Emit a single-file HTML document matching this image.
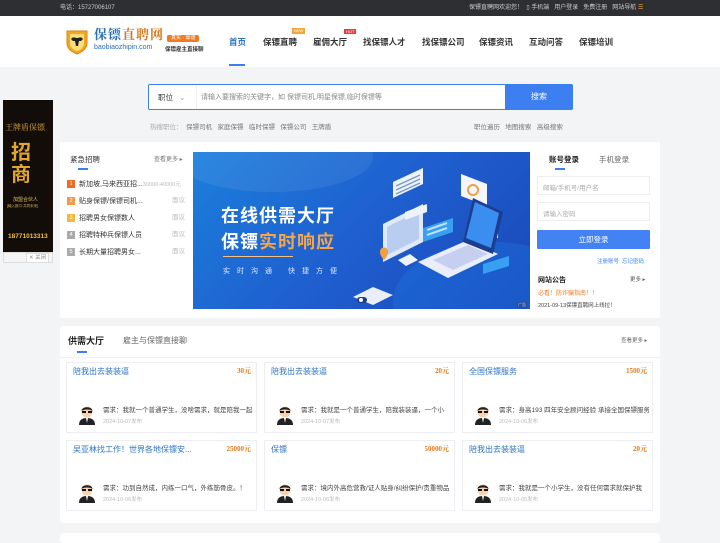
<!DOCTYPE html>
<html><head><meta charset="utf-8"><style>
*{margin:0;padding:0;box-sizing:border-box}
body{width:720px;height:540px;overflow:hidden;background:#f3f4f6;font-family:"Liberation Sans","Noto Sans CJK SC",sans-serif;font-size:8px;color:#333;position:relative}
.a{position:absolute}
.top{left:0;top:0;width:720px;height:16px;background:#2d2f33;color:#ccc;font-size:6px;line-height:16px}
.hdr{left:0;top:16px;width:720px;height:51px;background:#fff}
.nav{top:36px;font-size:8.5px;color:#333;font-weight:bold}
.panel{background:#fff}
.li{left:67px;font-size:7px;color:#333}
.num{display:inline-block;width:8px;height:8px;font-size:5.5px;color:#fff;text-align:center;line-height:8px;margin-right:4px;vertical-align:middle}
.card{background:#fff;border:1px solid #eceef1;width:191px;height:71px}
.card .t{position:absolute;left:6px;top:3px;color:#2d73c4;font-size:8px}
.card .p{position:absolute;right:5px;top:3px;color:#e87a1f;font-size:7px;font-weight:bold;font-family:"Liberation Serif","Noto Serif CJK SC",serif}
.card .d{position:absolute;left:36px;top:41px;width:150px;white-space:nowrap;overflow:hidden;font-size:6.5px;color:#444}
.card .dt{position:absolute;left:36px;top:54px;font-size:5.5px;color:#bbb}
.card svg{position:absolute;left:10px;top:40px}
</style></head><body>
<div class="a top"><span class="a" style="left:60px">电话：15727006107</span><span class="a" style="left:469px">保镖直聘网欢迎您！ &nbsp;▯ 手机端 &nbsp; 用户登录 &nbsp; 免费注册 &nbsp; 网站导航 <span style="color:#e8a33a">☰</span></span></div>
<div class="a hdr"></div>
<svg class="a" style="left:66px;top:29px" width="22" height="26" viewBox="0 0 22 26"><path d="M1 2h20v12c0 6-5 9-10 11C6 23 1 20 1 14z" fill="#f3a623" stroke="#d88610"/><path d="M4 5h14v9c0 4-3 7-7 8-4-1-7-4-7-8z" fill="#fbe07a"/><path d="M5 10c2-3 4-1 6-1s4-2 6 1l-2 2h-2l-1 5h-2l-1-5H7z" fill="#222"/></svg>
<div class="a" style="left:94px;top:24px;font-size:13px;font-weight:bold;color:#2a6fb8;letter-spacing:1px;font-family:'Noto Serif CJK SC',serif">保镖<span style="color:#d9771b">直聘网</span></div>
<div class="a" style="left:167px;top:35px;background:#f07b22;color:#fff;font-size:5px;padding:0 4px;line-height:7px;border-radius:2px">真实 · 靠谱</div>
<div class="a" style="left:94px;top:44px;font-size:7px;color:#2a6fb8">baobiaozhipin.com</div>
<div class="a" style="left:165px;top:45px;font-size:5.5px;color:#333;font-weight:bold">保镖雇主直接聊</div>
<div class="a nav" style="left:229px;color:#2d73c4">首页</div>
<div class="a" style="left:229px;top:64px;width:16px;height:2px;background:#3d7ff0"></div>
<div class="a nav" style="left:263px">保镖直聘</div>
<div class="a" style="left:292px;top:28px;background:#f2a73b;color:#fff;font-size:4px;padding:0 2px;line-height:6px">NEW</div>
<div class="a nav" style="left:313px">雇佣大厅</div>
<div class="a" style="left:344px;top:29px;background:#e63c3c;color:#fff;font-size:4px;padding:0 2px;line-height:5px">HOT</div>
<div class="a nav" style="left:363px">找保镖人才</div>
<div class="a nav" style="left:422px">找保镖公司</div>
<div class="a nav" style="left:479px">保镖资讯</div>
<div class="a nav" style="left:529px">互动问答</div>
<div class="a nav" style="left:579px">保镖培训</div>

<div class="a" style="left:148px;top:84px;width:425px;height:26px;border:1px solid #3d7ff0;background:#fff;border-radius:2px"></div>
<div class="a" style="left:158px;top:92px;font-size:7.5px;color:#333">职位 <span style="color:#999;margin-left:4px">⌄</span></div>
<div class="a" style="left:196px;top:85px;width:1px;height:24px;background:#eee"></div>
<div class="a" style="left:201px;top:92px;font-size:7px;color:#888">请输入要搜索的关键字，如 保镖司机,明星保镖,临时保镖等</div>
<div class="a" style="left:505px;top:84px;width:68px;height:26px;background:#3d7ff0;color:#fff;font-size:8px;text-align:center;line-height:26px;border-radius:0 2px 2px 0">搜索</div>
<div class="a" style="left:150px;top:121px;font-size:6.5px;color:#aaa">热搜职位： &nbsp;<span style="color:#777">保镖司机 &nbsp; 家庭保镖 &nbsp; 临时保镖 &nbsp; 保镖公司 &nbsp; 王牌盾</span></div>
<div class="a" style="left:474px;top:121px;font-size:6.5px;color:#777">职位遍历 &nbsp; 地图搜索 &nbsp; 高级搜索</div>

<div class="a" style="left:3px;top:100px;width:50px;height:153px;background:#120d08;overflow:hidden">
<div class="a" style="left:2px;top:22px;font-size:8px;color:#d9a23a;font-family:'Noto Serif CJK SC',serif">王牌盾保镖</div>
<div class="a" style="left:8px;top:42px;font-size:20px;line-height:22px;color:#e0a72c;font-weight:bold">招<br>商</div>
<div class="a" style="left:10px;top:96px;font-size:5px;color:#e8c060">加盟合伙人</div>
<div class="a" style="left:4px;top:104px;font-size:3.5px;color:#d9b050">[输入报口·共同未来]</div>
<div class="a" style="left:5px;top:133px;font-size:6.5px;color:#f0c040;font-weight:bold">18771013313</div></div>
<div class="a" style="left:3px;top:252px;width:50px;height:11px;background:#f5f5f5;border:1px solid #ddd"></div>
<div class="a" style="left:26px;top:253px;font-size:5.5px;color:#888;background:#fff;border:1px solid #ddd;padding:0 2px;line-height:8px">✕ 关闭</div>

<div class="a panel" style="left:60px;top:142px;width:600px;height:176px"></div>
<div class="a" style="left:70px;top:154px;font-size:7.5px;color:#333">紧急招聘</div>
<div class="a" style="left:78px;top:168px;width:10px;height:2px;background:#3d7ff0"></div>
<div class="a" style="left:154px;top:154px;font-size:6px;color:#777">查看更多 ▸</div>
<div class="a li" style="top:179px"><span class="num" style="background:#f06a22">1</span>新加坡,马来西亚招...<span style="color:#bbb;font-size:5.5px">30000-40000元</span></div>
<div class="a li" style="top:196px"><span class="num" style="background:#f39a4a">2</span>贴身保镖/保镖司机...</div>
<div class="a li" style="top:213px"><span class="num" style="background:#f5b73b">3</span>招聘男女保镖数人</div>
<div class="a li" style="top:230px"><span class="num" style="background:#aaa">4</span>招聘特种兵保镖人员</div>
<div class="a li" style="top:247px"><span class="num" style="background:#aaa">5</span>长期大量招聘男女...</div>
<div class="a" style="left:172px;top:192px;font-size:6.5px;color:#bbb;line-height:17px">面议<br>面议<br>面议<br>面议</div>

<div class="a" style="left:193px;top:152px;width:337px;height:157px;background:linear-gradient(135deg,#1b7fdc 0%,#1f5fcf 50%,#1a47b8 100%);overflow:hidden">
<div class="a" style="left:-20px;top:-30px;width:200px;height:70px;border-radius:50%;background:rgba(255,255,255,.07)"></div>
<div class="a" style="left:200px;top:90px;width:200px;height:120px;border-radius:50%;background:rgba(30,120,230,.35)"></div>
<div class="a" style="left:28px;top:50px;font-size:18px;font-weight:bold;color:#fff;letter-spacing:1px">在线供需大厅</div>
<div class="a" style="left:28px;top:76px;font-size:18px;font-weight:bold;color:#fff;letter-spacing:1px">保镖<span style="color:#f5a54a">实时响应</span></div>
<div class="a" style="left:30px;top:104px;width:70px;height:1px;background:#f5c080"></div>
<div class="a" style="left:30px;top:114px;font-size:7px;color:#dfe9ff;letter-spacing:7px">实时沟通 快捷方便</div>
<svg class="a" style="left:160px;top:0" width="157" height="157" viewBox="0 0 157 157">
<path d="M40 30l30-14v16l-30 14z" fill="#eef3fb"/><path d="M43 34l24-11M43 38l24-11M43 42l24-11" stroke="#7a9ac8" stroke-width="1.5"/>
<path d="M30 72l40-20v38l-40 20z" fill="#dfe9f8"/><path d="M34 75l32-16v28l-32 16z" fill="#b8cdf0"/><path d="M45 108l12-6 8 6-12 6z" fill="#eef3fb"/>
<path d="M52 60l22-8v8l-22 8z" fill="#eef3fb"/>
<path d="M108 22l26 10v22l-26-10z" fill="#f4f6fb"/><circle cx="120" cy="38" r="5" fill="none" stroke="#f0a040" stroke-width="2"/>
<path d="M125 70l20 6v10l-20-6z" fill="#f4f6fb"/>
<path d="M65 110l50-22 30 14-50 24z" fill="#e9eef9"/><path d="M80 108l35-15 20 9-35 16z" fill="#c6cff0"/>
<path d="M110 90l10-44 30 14-10 42z" fill="#1d3d8f"/><path d="M113 86l9-36 24 11-8 35z" fill="#3a8ef0"/>
<path d="M70 76l30-10v14l-30 10z" fill="#38a0f0"/><path d="M74 78l20-7M74 83l20-7" stroke="#bfe0ff" stroke-width="2"/>
<path d="M130 112l26-8v10l-26 8z" fill="#38a0f0"/>
<path d="M27 100c0-6 8-6 8 0 0 4-4 8-4 8s-4-4-4-8z" fill="#f0a040"/>
<path d="M0 145l20-10 20 8-20 10z" fill="#e9eef9"/>
</svg>
<div class="a" style="left:164px;top:145px;width:10px;height:6px;background:#1d3f8a;border-radius:3px"></div>
<div class="a" style="left:166px;top:146px;width:4px;height:4px;background:#fff;border-radius:50%"></div>
<div class="a" style="left:324px;top:150px;font-size:4px;color:#ccc;background:#2550a0;padding:0 1px">广告</div>
</div>

<div class="a" style="left:549px;top:154px;font-size:7.5px;font-weight:bold;color:#222">账号登录</div>
<div class="a" style="left:555px;top:168px;width:10px;height:2px;background:#3d7ff0"></div>
<div class="a" style="left:599px;top:154px;font-size:7.5px;color:#666">手机登录</div>
<div class="a" style="left:537px;top:176px;width:113px;height:19px;border:1px solid #eee"></div>
<div class="a" style="left:543px;top:182px;font-size:6.5px;color:#aaa">邮箱/手机号/用户名</div>
<div class="a" style="left:537px;top:202px;width:113px;height:19px;border:1px solid #eee"></div>
<div class="a" style="left:543px;top:208px;font-size:6.5px;color:#aaa">请输入密码</div>
<div class="a" style="left:537px;top:230px;width:113px;height:19px;background:#4382f3;color:#fff;font-size:7.5px;text-align:center;line-height:19px;border-radius:1px">立即登录</div>
<div class="a" style="left:597px;top:257px;font-size:5.5px;color:#3d7ff0">注册账号 &nbsp;忘记密码</div>
<div class="a" style="left:538px;top:275px;font-size:7px;font-weight:bold;color:#222">网站公告</div>
<div class="a" style="left:630px;top:275px;font-size:5.5px;color:#555">更多 ▸</div>
<div class="a" style="left:538px;top:288px;font-size:6px;color:#f07b22">必看！防诈骗指南！！</div>
<div class="a" style="left:538px;top:301px;font-size:5.5px;color:#444">2021-09-13保镖直聘网上线拉！</div>

<div class="a panel" style="left:60px;top:326px;width:600px;height:197px;border-radius:3px"></div>
<div class="a" style="left:68px;top:334px;font-size:9px;font-weight:bold;color:#222">供需大厅</div>
<div class="a" style="left:77px;top:351px;width:10px;height:2px;background:#3d7ff0"></div>
<div class="a" style="left:123px;top:335px;font-size:8px;color:#666">雇主与保镖直接聊</div>
<div class="a" style="left:621px;top:336px;font-size:5.5px;color:#666">查看更多 ▸</div>
<div class="a" style="left:60px;top:357px;width:600px;height:1px;background:#f2f2f2"></div>

<div class="a card" style="left:66px;top:362px"><div class="t">陪我出去装装逼</div><div class="p">30元</div><svg width="20" height="22" viewBox="0 0 20 22"><path d="M2 22c0-5 3-7 8-7s8 2 8 7z" fill="#222"/><path d="M9 15l1 5 1-5z" fill="#fff"/><circle cx="10" cy="9" r="5.5" fill="#f6d2b0"/><path d="M4.5 8c0-5 11-5 11 0-2-2-9-2-11 0z" fill="#222"/><rect x="5" y="8" width="4" height="2" fill="#111"/><rect x="11" y="8" width="4" height="2" fill="#111"/></svg><div class="d">需求：我就一个普通学生，没啥需求，就是陪我一起</div><div class="dt">2024-10-07发布</div></div>
<div class="a card" style="left:264px;top:362px"><div class="t">陪我出去装装逼</div><div class="p">20元</div><svg width="20" height="22" viewBox="0 0 20 22"><path d="M2 22c0-5 3-7 8-7s8 2 8 7z" fill="#222"/><path d="M9 15l1 5 1-5z" fill="#fff"/><circle cx="10" cy="9" r="5.5" fill="#f6d2b0"/><path d="M4.5 8c0-5 11-5 11 0-2-2-9-2-11 0z" fill="#222"/><rect x="5" y="8" width="4" height="2" fill="#111"/><rect x="11" y="8" width="4" height="2" fill="#111"/></svg><div class="d">需求：我就是一个普通学生，陪我装装逼，一个小</div><div class="dt">2024-10-07发布</div></div>
<div class="a card" style="left:462px;top:362px"><div class="t">全国保镖服务</div><div class="p">1500元</div><svg width="20" height="22" viewBox="0 0 20 22"><path d="M2 22c0-5 3-7 8-7s8 2 8 7z" fill="#222"/><path d="M9 15l1 5 1-5z" fill="#fff"/><circle cx="10" cy="9" r="5.5" fill="#f6d2b0"/><path d="M4.5 8c0-5 11-5 11 0-2-2-9-2-11 0z" fill="#222"/><rect x="5" y="8" width="4" height="2" fill="#111"/><rect x="11" y="8" width="4" height="2" fill="#111"/></svg><div class="d">需求：身高193 四年安全顾问经验 承接全国保镖服务</div><div class="dt">2024-10-06发布</div></div>
<div class="a card" style="left:66px;top:440px"><div class="t">吴亚林找工作！世界各地保镖安...</div><div class="p">25000元</div><svg width="20" height="22" viewBox="0 0 20 22"><path d="M2 22c0-5 3-7 8-7s8 2 8 7z" fill="#222"/><path d="M9 15l1 5 1-5z" fill="#fff"/><circle cx="10" cy="9" r="5.5" fill="#f6d2b0"/><path d="M4.5 8c0-5 11-5 11 0-2-2-9-2-11 0z" fill="#222"/><rect x="5" y="8" width="4" height="2" fill="#111"/><rect x="11" y="8" width="4" height="2" fill="#111"/></svg><div class="d">需求：功到自然成，内练一口气，外练筋骨皮。！</div><div class="dt">2024-10-06发布</div></div>
<div class="a card" style="left:264px;top:440px"><div class="t">保镖</div><div class="p">50000元</div><svg width="20" height="22" viewBox="0 0 20 22"><path d="M2 22c0-5 3-7 8-7s8 2 8 7z" fill="#222"/><path d="M9 15l1 5 1-5z" fill="#fff"/><circle cx="10" cy="9" r="5.5" fill="#f6d2b0"/><path d="M4.5 8c0-5 11-5 11 0-2-2-9-2-11 0z" fill="#222"/><rect x="5" y="8" width="4" height="2" fill="#111"/><rect x="11" y="8" width="4" height="2" fill="#111"/></svg><div class="d">需求：境内外高危营救/证人贴身/纠纷保护/贵重物品</div><div class="dt">2024-10-06发布</div></div>
<div class="a card" style="left:462px;top:440px"><div class="t">陪我出去装装逼</div><div class="p">20元</div><svg width="20" height="22" viewBox="0 0 20 22"><path d="M2 22c0-5 3-7 8-7s8 2 8 7z" fill="#222"/><path d="M9 15l1 5 1-5z" fill="#fff"/><circle cx="10" cy="9" r="5.5" fill="#f6d2b0"/><path d="M4.5 8c0-5 11-5 11 0-2-2-9-2-11 0z" fill="#222"/><rect x="5" y="8" width="4" height="2" fill="#111"/><rect x="11" y="8" width="4" height="2" fill="#111"/></svg><div class="d">需求：我就是一个小学生，没有任何需求就保护我</div><div class="dt">2024-10-05发布</div></div>

<div class="a panel" style="left:60px;top:533px;width:600px;height:10px;border-radius:3px"></div>
</body></html>
